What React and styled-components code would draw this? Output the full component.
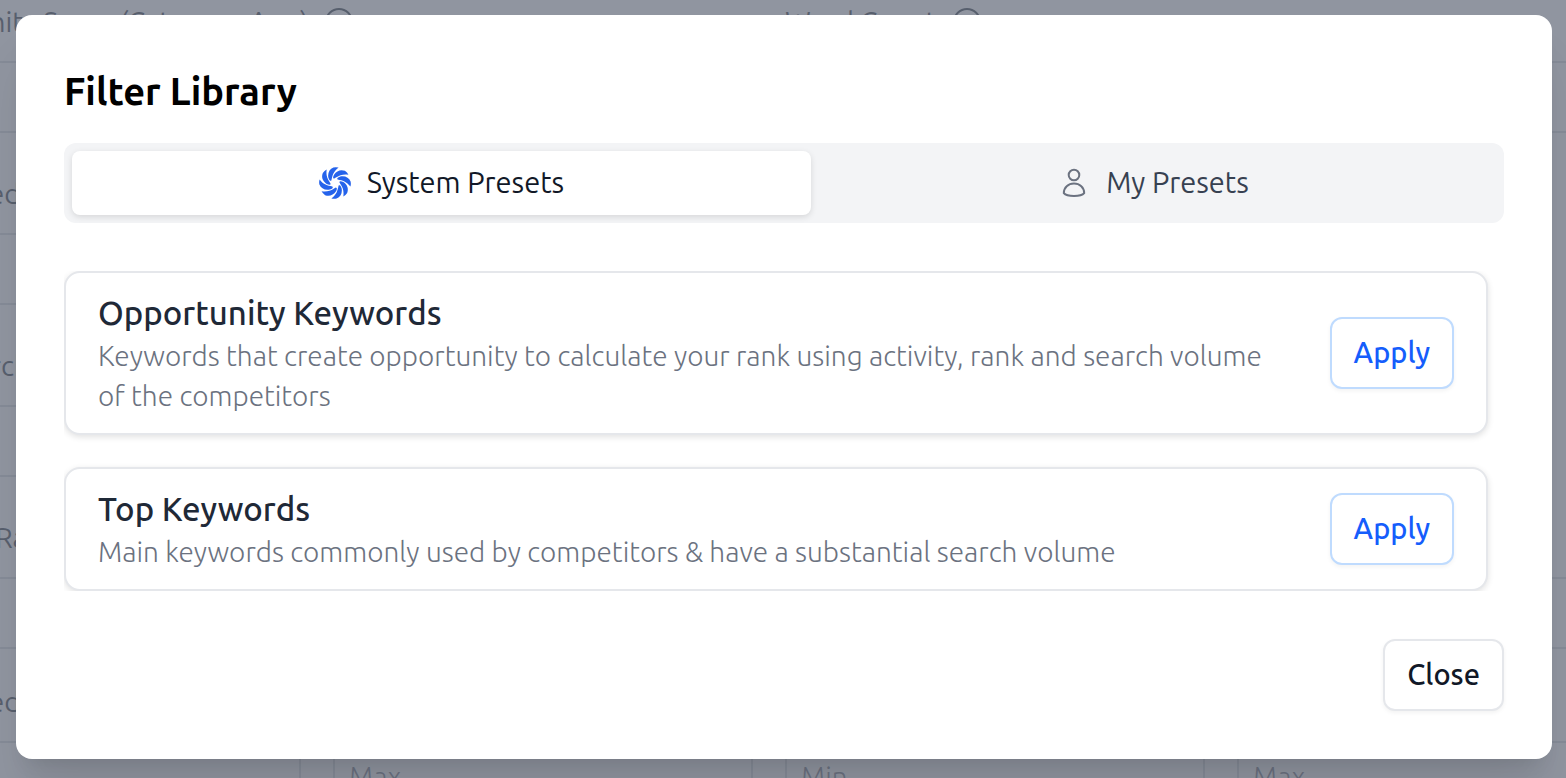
import React from 'react';
import styled, { createGlobalStyle } from 'styled-components';

const GlobalStyle = createGlobalStyle`
  *, *::before, *::after { box-sizing: border-box; }
  html, body { margin: 0; height: 100%; overflow: hidden; }
  body { font-family: Ubuntu, "Noto Sans", "Open Sans", sans-serif; background: #fff; }
  #root { height: 100%; }
  button, input { font-family: inherit; margin: 0; }
  h2, h3, p { margin: 0; }
`;

const Page = styled.div`
  position: relative;
  height: 100%;
  overflow: hidden;
`;

const Filters = styled.form`
  display: grid;
  grid-template-columns: repeat(2, 872px);
  column-gap: 32px;
  margin-left: -119px;
`;

const Field = styled.fieldset`
  display: flex;
  flex-direction: column;
  justify-content: flex-end;
  border: 0;
  margin: 0;
  padding: 0;
  min-width: 0;
  height: ${(p) => p.$height}px;
`;

const FieldLabel = styled.label`
  display: flex;
  align-items: center;
  gap: 16px;
  margin-bottom: 19px;
  font-size: 28px;
  line-height: 40px;
  color: #1f2937;
  white-space: nowrap;
`;

const Range = styled.div`
  display: grid;
  grid-template-columns: 1fr 1fr;
  gap: 32px;
`;

const FieldInput = styled.input`
  width: 100%;
  height: 72px;
  padding: 0 14px 2px;
  border: 2px solid #d1d5db;
  border-radius: 12px;
  background: transparent;
  font-size: 28px;
  font-weight: 300;
  &::placeholder { color: #6b7280; opacity: 1; }
`;

const Overlay = styled.div`
  position: absolute;
  inset: 0;
  padding: 15px 14px 0 16px;
  background: rgba(107, 114, 128, 0.75);
`;

const Dialog = styled.section`
  padding: 48px;
  border-radius: 16px;
  background: #fff;
  box-shadow: 0 40px 50px -10px rgba(0, 0, 0, 0.1), 0 16px 20px -12px rgba(0, 0, 0, 0.1);
`;

const Title = styled.h2`
  font-size: 38px;
  line-height: 56px;
  font-weight: 600;
  color: #000;
`;

const Tabs = styled.div`
  display: flex;
  margin-top: 24px;
  padding: 8px;
  border-radius: 12px;
  background: #f3f4f6;
`;

const Tab = styled.button`
  display: flex;
  flex: ${(p) => (p.$active ? '739 1 0' : '685 1 0')};
  align-items: center;
  justify-content: center;
  gap: 16px;
  height: 64px;
  padding: 0;
  border: 0;
  border-radius: 8px;
  background: ${(p) => (p.$active ? '#fff' : 'transparent')};
  box-shadow: ${(p) => (p.$active ? '0 2px 6px rgba(0, 0, 0, 0.12)' : 'none')};
  color: ${(p) => (p.$active ? '#111827' : '#374151')};
  font-size: 29px;
  line-height: 40px;
`;

const TabLabel = styled.span`
  padding-bottom: 2px;
`;

const PresetList = styled.div`
  display: flex;
  flex-direction: column;
  gap: 32px;
  margin-top: 48px;
  padding-right: 16px;
  overflow: hidden;
`;

const Preset = styled.article`
  display: flex;
  align-items: center;
  justify-content: space-between;
  gap: 48px;
  padding: 17px 32px;
  border: 2px solid #e5e7eb;
  border-radius: 16px;
  background: #fff;
  box-shadow: 0 2px 6px rgba(0, 0, 0, 0.12);
`;

const PresetName = styled.h3`
  font-size: 33px;
  line-height: 46px;
  font-weight: 500;
  color: #1f2937;
`;

const PresetText = styled.p`
  font-size: 28px;
  line-height: 40px;
  font-weight: 300;
  color: #6b7280;
`;

const Button = styled.button`
  flex: none;
  height: 72px;
  padding: 0 22px 2px;
  border: 2px solid ${(p) => (p.$primary ? '#bfdbfe' : '#e5e7eb')};
  border-radius: 12px;
  background: #fff;
  box-shadow: 0 2px 4px rgba(0, 0, 0, 0.05);
  color: ${(p) => (p.$primary ? '#155dfc' : '#111827')};
  font-size: 29px;
  line-height: 40px;
  font-weight: 500;
`;

const Footer = styled.footer`
  display: flex;
  justify-content: flex-end;
  margin-top: 48px;
`;

const BLADES = [0, 45, 90, 135, 180, 225, 270, 315];

function SwirlIcon() {
  return (
    <svg width="32" height="32" viewBox="-16 -16 32 32" fill="#2563eb" aria-hidden="true">
      {BLADES.map((angle) => (
        <path
          key={angle}
          transform={`rotate(${angle})`}
          d="M-6.6 -5.2 C-7.6 -10 -5.6 -14 -1.6 -15.6 Q1.2 -16.2 3.6 -15.4 C1 -13.4 -0.4 -11.6 -1.6 -9.4 C-2.6 -7.4 -3 -5.2 -3.6 -2.6 C-5 -1.4 -6 -3.4 -6.6 -5.2 Z"
        />
      ))}
    </svg>
  );
}

function UserIcon() {
  return (
    <svg width="32" height="32" viewBox="0 0 32 32" fill="none" stroke="#6b7280" strokeWidth="2" aria-hidden="true">
      <circle cx="16" cy="8" r="5.3" />
      <path d="M5.8 26.2 C5.8 20.6 10.2 16.6 16 16.6 S26.2 20.6 26.2 26.2 C23 30 9 30 5.8 26.2 Z" strokeLinejoin="round" />
    </svg>
  );
}

function InfoIcon() {
  return (
    <svg width="28" height="28" viewBox="0 0 28 28" fill="none" stroke="#1f2937" strokeWidth="2" aria-hidden="true">
      <circle cx="14" cy="14" r="13" />
      <path d="M14 13v7M14 8v2" />
    </svg>
  );
}

const ROWS = [
  { labels: ['Opportunity Score (Category App)', 'Word Count'], height: 133, info: true },
  { labels: ['Completed', 'Length'], height: 172, short: true },
  { labels: ['High Search', 'Volume'], height: 172, short: true },
  { labels: ['Previous Rank', 'Change'], height: 172 },
  { labels: ['Completed', 'Results'], height: 164 },
];

const PRESETS = [
  {
    name: 'Opportunity Keywords',
    text: 'Keywords that create opportunity to calculate your rank using activity, rank and search volume of the competitors',
  },
  {
    name: 'Top Keywords',
    text: 'Main keywords commonly used by competitors & have a substantial search volume',
  },
];

export default function App() {
  return (
    <Page>
      <GlobalStyle />
      <Filters>
        {ROWS.map((row, i) =>
          row.labels.map((label, side) => (
            <Field key={`${i}-${side}`} $height={row.height}>
              <FieldLabel htmlFor={`min-${i}-${side}`}>
                {label}
                {row.info && <InfoIcon />}
              </FieldLabel>
              <Range>
                <FieldInput id={`min-${i}-${side}`} placeholder="Min" />
                {!(row.short && side === 1) && <FieldInput aria-label={`${label} maximum`} placeholder="Max" />}
              </Range>
            </Field>
          ))
        )}
        <Field $height={72} />
      </Filters>
      <Overlay>
        <Dialog role="dialog" aria-labelledby="dialog-title">
          <Title id="dialog-title">Filter Library</Title>
          <Tabs role="tablist">
            <Tab type="button" role="tab" aria-selected="true" $active>
              <SwirlIcon />
              <TabLabel>System Presets</TabLabel>
            </Tab>
            <Tab type="button" role="tab" aria-selected="false">
              <UserIcon />
              <TabLabel>My Presets</TabLabel>
            </Tab>
          </Tabs>
          <PresetList>
            {PRESETS.map((preset) => (
              <Preset key={preset.name}>
                <div>
                  <PresetName>{preset.name}</PresetName>
                  <PresetText>{preset.text}</PresetText>
                </div>
                <Button type="button" $primary>Apply</Button>
              </Preset>
            ))}
          </PresetList>
          <Footer>
            <Button type="button">Close</Button>
          </Footer>
        </Dialog>
      </Overlay>
    </Page>
  );
}
